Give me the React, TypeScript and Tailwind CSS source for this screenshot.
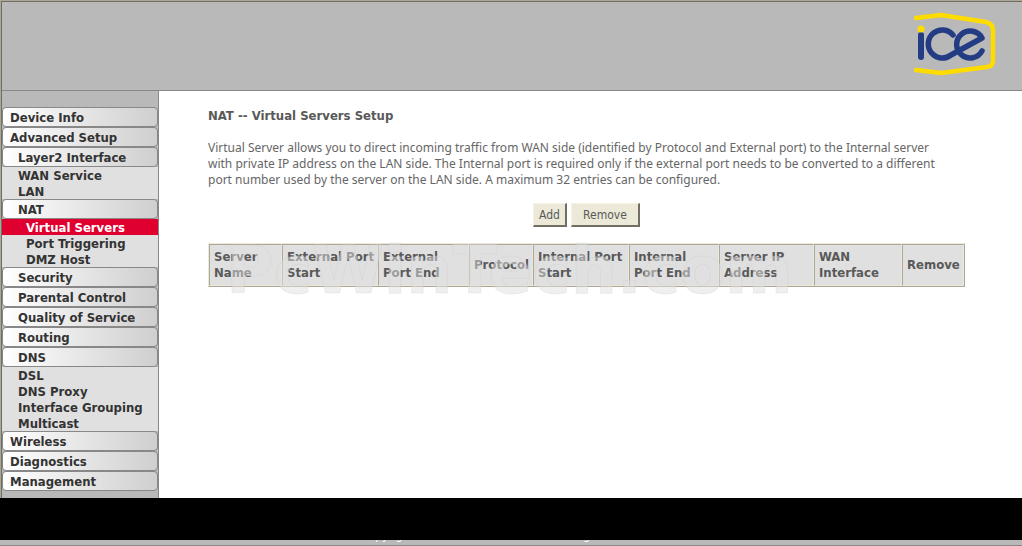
import clsx from 'clsx';

type NavItem = { label: string; level: 0 | 1 | 2; folder?: boolean; active?: boolean };

const navItems: NavItem[] = [
  { label: 'Device Info', level: 0, folder: true },
  { label: 'Advanced Setup', level: 0, folder: true },
  { label: 'Layer2 Interface', level: 1, folder: true },
  { label: 'WAN Service', level: 1 },
  { label: 'LAN', level: 1 },
  { label: 'NAT', level: 1, folder: true },
  { label: 'Virtual Servers', level: 2, active: true },
  { label: 'Port Triggering', level: 2 },
  { label: 'DMZ Host', level: 2 },
  { label: 'Security', level: 1, folder: true },
  { label: 'Parental Control', level: 1, folder: true },
  { label: 'Quality of Service', level: 1, folder: true },
  { label: 'Routing', level: 1, folder: true },
  { label: 'DNS', level: 1, folder: true },
  { label: 'DSL', level: 1 },
  { label: 'DNS Proxy', level: 1 },
  { label: 'Interface Grouping', level: 1 },
  { label: 'Multicast', level: 1 },
  { label: 'Wireless', level: 0, folder: true },
  { label: 'Diagnostics', level: 0, folder: true },
  { label: 'Management', level: 0, folder: true },
];

const columns = [
  { label: 'Server Name', width: 'w-[73px]' },
  { label: 'External Port Start', width: 'w-[96px]' },
  { label: 'External Port End', width: 'w-[91px]' },
  { label: 'Protocol', width: 'w-[64px]' },
  { label: 'Internal Port Start', width: 'w-[96px]' },
  { label: 'Internal Port End', width: 'w-[90px]' },
  { label: 'Server IP Address', width: 'w-[95px]' },
  { label: 'WAN Interface', width: 'w-[88px]' },
  { label: 'Remove', width: 'w-[62px]' },
];

const indent = ['pl-[7px]', 'pl-[15px]', 'pl-[23px]'];

const Logo = () => (
  <svg width="84" height="68" viewBox="0 0 84 68" fill="none" strokeLinecap="round" strokeLinejoin="round" role="img" aria-label="ice">
    <path d="M3 8 L28 5 L73 12 Q80 14 80 20 V51 Q80 56 74 57 L28 63 L3 60" stroke="#ffdc00" strokeWidth="4.500" />
    <path d="M8 25 V47" stroke="#243c84" strokeWidth="6" />
    <circle cx="8" cy="19" r="3.500" fill="#ffdc00" />
    <path d="M40 25 A14 14 0 1 0 38 45 L69 28 A13.500 13.500 0 1 0 69 41" stroke="#243c84" strokeWidth="5.500" />
  </svg>
);

const Sidebar = () => (
  <nav className="w-[157px] shrink-0 border-r border-[#888] bg-[#b9b9b9] pt-4 pb-[7px] font-bold text-[#333]">
    <ul className="bg-[#e0e0e0]">
      {navItems.map((item) => (
        <li key={item.label} className={item.folder ? 'bg-[#b9b9b9]' : ''}>
          <a
            href="#"
            className={clsx(
              'block border-x',
              indent[item.level],
              item.folder
                ? 'h-5 rounded-[4px] border-y border-[#888] bg-linear-to-r from-white to-[#cfcfcf] leading-5'
                : 'h-4 border-transparent leading-[18px]',
              item.active && 'bg-[#e00030] text-white',
            )}
          >
            {item.label}
          </a>
        </li>
      ))}
    </ul>
  </nav>
);

const buttonStyle =
  'h-6 border-t border-r-2 border-b-2 border-l border-t-[#f5f3e8] border-r-[#716f64] border-b-[#716f64] border-l-[#f5f3e8] bg-[#ece9d8] text-[12px]';

const App = () => {
  return (
    <div className="bg-[#b9b9b9] font-['DejaVu_Sans_Condensed','DejaVu_Sans',sans-serif] text-[13px] leading-4 text-[#595959]">
      <div className="border-t border-l border-[#aca899]">
        <div className="border-t border-l border-[#716f64]">
          <header className="flex h-[89px] justify-end border-b border-[#888] pt-2 pr-[25px]">
            <Logo />
          </header>

          <div className="flex">
            <Sidebar />
            <main className="min-w-0 flex-1 bg-white pt-[17px] pl-[49px]">
              <h1 className="font-bold">NAT -- Virtual Servers Setup</h1>
              <div className="w-[757px]">
                <p className="mt-4 font-['Noto_Sans',sans-serif] text-[12px] text-[#666]">
                  Virtual Server allows you to direct incoming traffic from WAN side (identified by Protocol and External port) to the Internal server
                  <br />
                  with private IP address on the LAN side. The Internal port is required only if the external port needs to be converted to a different
                  <br />
                  port number used by the server on the LAN side. A maximum 32 entries can be configured.
                </p>
                <div className="mt-[15px] flex justify-center gap-1">
                  <button type="button" className={clsx(buttonStyle, 'w-[34px]')}>Add</button>
                  <button type="button" className={clsx(buttonStyle, 'w-[69px]')}>Remove</button>
                </div>
                <div className="relative mt-4">
                  <table className="w-full table-fixed border-separate border-spacing-0 border border-t-[#ece9d8] border-r-[#aca899] border-b-[#aca899] border-l-[#ece9d8] bg-[#e0e0e0]">
                    <thead>
                      <tr className="h-[42px]">
                        {columns.map((col) => (
                          <th
                            key={col.label}
                            scope="col"
                            className={clsx(
                              col.width,
                              'border border-t-[#aca899] border-r-[#ece9d8] border-b-[#ece9d8] border-l-[#aca899] pr-0 pl-1 text-left align-middle',
                            )}
                          >
                            {col.label}
                          </th>
                        ))}
                      </tr>
                    </thead>
                  </table>
                  <span className="pointer-events-none absolute -top-2.5 left-[18px] font-['DejaVu_Sans'] text-[65px] leading-[76px] font-bold text-[#e0e0e0]/50 [-webkit-text-stroke:1px_#cccccc40]">
                    PcWinTech.com
                  </span>
                </div>
              </div>
            </main>
          </div>
        </div>
      </div>

      <footer className="relative h-12 border-b border-[#888] pt-[29px] text-[12px] text-white">
        <div className="mx-auto flex w-[300px] justify-between">
          <span>Copyright (c)</span>
          <span>All rights reserved.</span>
        </div>
        <div className="absolute inset-x-0 top-0 h-[42px] bg-black" />
      </footer>
    </div>
  );
};

export default App;
